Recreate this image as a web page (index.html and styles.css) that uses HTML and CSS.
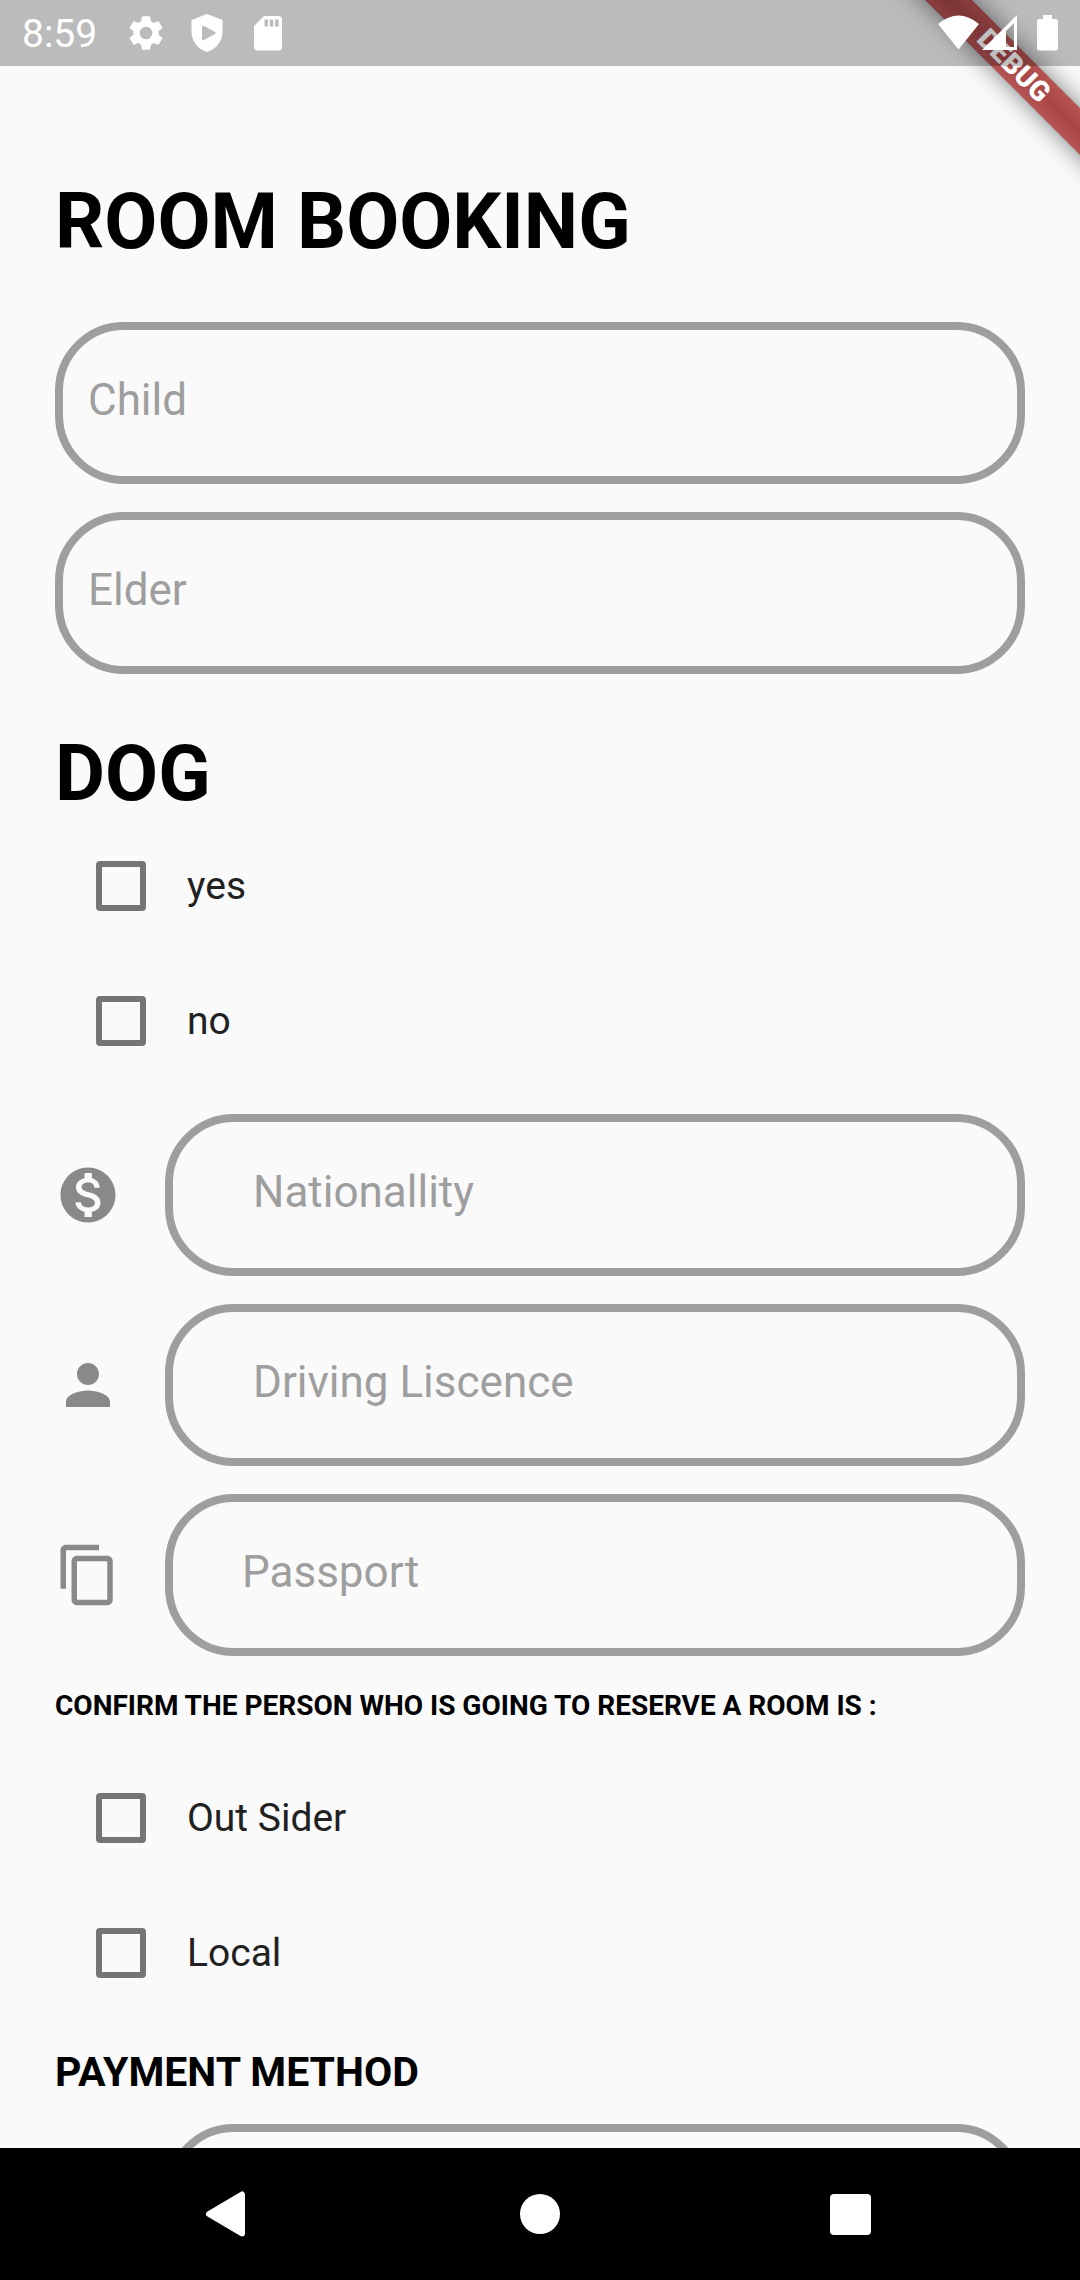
FILE: index.html
```html
<!DOCTYPE html>
<html lang="en">
<head>
<meta charset="utf-8">
<meta name="viewport" content="width=device-width, initial-scale=1">
<title>Room Booking</title>
<link rel="stylesheet" href="styles.css">
</head>
<body>
<div class="screen">
  <header class="status-bar">
    <div class="status-left">
      <span class="clock">8:59</span>
      <svg class="status-icon" viewBox="0 0 24 24" aria-hidden="true"><path fill="#fff" d="M19.14 12.94c.04-.3.06-.61.06-.94 0-.32-.02-.64-.07-.94l2.03-1.58c.18-.14.23-.41.12-.61l-1.92-3.32c-.12-.22-.37-.29-.59-.22l-2.39.96c-.5-.38-1.03-.7-1.62-.94l-.36-2.54c-.04-.24-.24-.41-.48-.41h-3.84c-.24 0-.43.17-.47.41l-.36 2.54c-.59.24-1.13.57-1.62.94l-2.39-.96c-.22-.08-.47 0-.59.22L2.74 8.87c-.12.21-.08.47.12.61l2.03 1.58c-.05.3-.09.63-.09.94s.02.64.07.94l-2.03 1.58c-.18.14-.23.41-.12.61l1.92 3.32c.12.22.37.29.59.22l2.39-.96c.5.38 1.03.7 1.62.94l.36 2.54c.05.24.24.41.48.41h3.84c.24 0 .44-.17.47-.41l.36-2.54c.59-.24 1.13-.56 1.62-.94l2.39.96c.22.08.47 0 .59-.22l1.92-3.32c.12-.22.07-.47-.12-.61l-2.01-1.58zM12 15.6A3.6 3.6 0 1 1 12 8.400a3.600 3.600 0 0 1 0 7.200z"/></svg>
      <svg class="status-icon" viewBox="0 0 42 42" aria-hidden="true"><path fill="#fff" fill-rule="evenodd" d="M21 2L36.500 8V20C36.500 29 30 37.500 21 40C12 37.500 5.500 29 5.500 20V8ZM16 15V27Q16 29 18 28L29 22Q30.500 21 29 20L18 14Q16 13 16 15Z"/></svg>
      <svg class="status-icon" viewBox="0 0 42 42" aria-hidden="true"><path fill="#fff" fill-rule="evenodd" d="M17 4H31.500Q35 4 35 7.500V35Q35 38.500 31.500 38.500H10.500Q7 38.500 7 35V14ZM17.500 7.500V14.500H21V7.500ZM22.800 7.500V14.500H26.300V7.500ZM28.100 7.500V14.500H31.600V7.500Z"/></svg>
    </div>
    <svg class="status-right" viewBox="0 0 124 42" aria-hidden="true">
      <path fill="#fff" d="M2 12Q22.500-5 43 12L22.500 37.500Z"/>
      <path fill="#fff" fill-rule="evenodd" d="M81 3V38H46ZM78 11L70 19V35H78Z"/>
      <path fill="#fff" d="M107 3H116V7H119.500Q122 7 122 9.500V36Q122 38.500 119.500 38.500H103.500Q101 38.500 101 36V9.500Q101 7 103.500 7H107Z"/>
    </svg>
  </header>

  <div class="banner-corner"><div class="banner">DEBUG</div></div>

  <main class="content">
    <h1 class="heading">ROOM BOOKING</h1>
    <form class="form">
      <div class="fields">
        <input class="field" type="text" placeholder="Child" aria-label="Child">
        <input class="field" type="text" placeholder="Elder" aria-label="Elder">
      </div>

      <h2 class="heading">DOG</h2>
      <div class="options">
        <label class="option"><input class="box" type="checkbox">yes</label>
        <label class="option"><input class="box" type="checkbox">no</label>
      </div>

      <div class="fields">
        <div class="field-row">
          <svg class="field-icon" viewBox="0 0 24 24" aria-hidden="true"><path fill="currentColor" d="M12 2C6.480 2 2 6.480 2 12s4.480 10 10 10 10-4.480 10-10S17.520 2 12 2zm1.410 16.090V20h-2.670v-1.930c-1.710-.36-3.160-1.460-3.270-3.400h1.960c.1 1.050.82 1.870 2.650 1.870 1.960 0 2.400-.98 2.400-1.590 0-.83-.44-1.610-2.670-2.140-2.480-.6-4.180-1.620-4.180-3.670 0-1.720 1.390-2.840 3.110-3.210V4h2.670v1.950c1.860.45 2.790 1.860 2.850 3.390H14.300c-.05-1.110-.64-1.870-2.220-1.870-1.500 0-2.400.68-2.400 1.640 0 .84.65 1.390 2.670 1.910s4.180 1.390 4.180 3.910c-.01 1.830-1.380 2.830-3.120 3.160z"/></svg>
          <input class="field inset-wide" type="text" placeholder="Nationallity" aria-label="Nationallity">
        </div>
        <div class="field-row">
          <svg class="field-icon" viewBox="0 0 24 24" aria-hidden="true"><path fill="currentColor" d="M12 12c2.210 0 4-1.790 4-4s-1.790-4-4-4-4 1.790-4 4 1.790 4 4 4zm0 2c-2.670 0-8 1.340-8 4v2h16v-2c0-2.660-5.330-4-8-4z"/></svg>
          <input class="field inset-wide" type="text" placeholder="Driving Liscence" aria-label="Driving Liscence">
        </div>
        <div class="field-row">
          <svg class="field-icon" viewBox="0 0 24 24" aria-hidden="true"><path fill="currentColor" d="M16 1H4c-1.100 0-2 .9-2 2v14h2V3h12V1zm3 4H8c-1.100 0-2 .9-2 2v14c0 1.100.9 2 2 2h11c1.100 0 2-.9 2-2V7c0-1.100-.9-2-2-2zm0 16H8V7h11v14z"/></svg>
          <input class="field inset" type="text" placeholder="Passport" aria-label="Passport">
        </div>
      </div>

      <h3 class="note">CONFIRM THE PERSON WHO IS GOING TO RESERVE A ROOM IS :</h3>
      <div class="options">
        <label class="option"><input class="box" type="checkbox">Out Sider</label>
        <label class="option"><input class="box" type="checkbox">Local</label>
      </div>

      <h3 class="subheading">PAYMENT METHOD</h3>
      <div class="field-row">
        <span class="field-icon"></span>
        <input class="field inset-wide" type="text" aria-label="Payment method">
      </div>
    </form>
  </main>

  <nav class="nav-bar">
    <button class="nav-button" type="button" aria-label="Back"><svg class="nav-icon" viewBox="0 0 48 48" aria-hidden="true"><path fill="#fff" stroke="#fff" stroke-width="6" stroke-linejoin="round" d="M5 24L38 4.500V43.500Z"/></svg></button>
    <button class="nav-button" type="button" aria-label="Home"><svg class="nav-icon" viewBox="0 0 48 48" aria-hidden="true"><circle cx="24" cy="24" r="20" fill="#fff"/></svg></button>
    <button class="nav-button" type="button" aria-label="Recent apps"><svg class="nav-icon" viewBox="0 0 48 48" aria-hidden="true"><rect x="2" y="4" width="41" height="41" rx="4" fill="#fff"/></svg></button>
  </nav>
</div>
</body>
</html>
```
FILE: styles.css
```css
* {
  box-sizing: border-box;
}

body {
  margin: 0;
  background: #fafafa;
  color: #000;
  font-family: Roboto, "Liberation Sans", sans-serif;
}

.screen {
  position: relative;
  display: flex;
  flex-direction: column;
  height: 100vh;
  overflow: hidden;
}

/* Status bar: a translucent layer over the app */
.status-bar {
  position: relative;
  z-index: 2;
  flex: none;
  display: flex;
  align-items: center;
  justify-content: space-between;
  height: 66px;
  padding: 0 20px 0 22px;
  background: rgba(0, 0, 0, 0.25);
}

.status-left {
  display: flex;
  align-items: center;
}

.clock {
  margin-right: 28px;
  padding-top: 2px;
  color: #fff;
  font-size: 39px;
  line-height: 66px;
}

.status-icon {
  width: 42px;
  height: 42px;
  margin-right: 19px;
}

.status-right {
  width: 124px;
  height: 42px;
}

/* Debug ribbon across the top right corner */
.banner-corner {
  position: absolute;
  z-index: 1;
  top: 0;
  right: 0;
  width: 220px;
  height: 220px;
  overflow: hidden;
  pointer-events: none;
}

.banner {
  position: absolute;
  top: 49px;
  right: -134px;
  width: 400px;
  height: 33px;
  background:
    linear-gradient(rgba(183, 28, 28, 0.63), rgba(183, 28, 28, 0.63)),
    linear-gradient(rgba(0, 0, 0, 0.28), rgba(0, 0, 0, 0.42), rgba(0, 0, 0, 0.28));
  box-shadow: 0 0 24px rgba(0, 0, 0, 0.5);
  color: #fff;
  font-size: 28px;
  font-weight: 900;
  line-height: 33px;
  text-align: center;
  transform: rotate(45deg);
}

.content {
  flex: 1;
  min-height: 0;
  padding: 112px 55px 0;
  overflow: hidden;
}

.heading {
  margin: 0 0 56px;
  font-size: 77px;
  font-weight: 700;
  line-height: 88px;
}

.form .heading {
  margin: 56px 0 0;
}

.fields {
  display: flex;
  flex-direction: column;
  gap: 28px;
}

.options + .fields {
  margin-top: 26px;
}

.field-row {
  display: flex;
  align-items: center;
  gap: 44px;
}

.field-icon {
  flex: none;
  width: 66px;
  height: 66px;
  color: #898989;
}

.field {
  flex: 1 0 auto;
  width: 100%;
  min-width: 0;
  height: 162px;
  padding: 0 25px 6px;
  border: 8px solid #9e9e9e;
  border-radius: 69px;
  background: transparent;
  color: #212121;
  font-family: inherit;
  font-size: 44px;
}

.field-row .field {
  flex: 1;
  width: auto;
}

.field.inset {
  padding-left: 69px;
}

.field.inset-wide {
  padding-left: 80px;
}

.field::placeholder {
  color: #9e9e9e;
  opacity: 1;
}

.option {
  display: flex;
  align-items: center;
  gap: 41px;
  height: 135px;
  padding-left: 41px;
  color: #212121;
  font-size: 39px;
}

.box {
  appearance: none;
  width: 50px;
  height: 50px;
  margin: 0;
  border: 6px solid #757575;
  border-radius: 4px;
}

.note {
  margin: 34px 0 28px;
  font-size: 28px;
  font-weight: 700;
  line-height: 32px;
}

.subheading {
  margin: 28px 0;
  font-size: 41px;
  font-weight: 700;
  line-height: 48px;
}

/* System navigation */
.nav-bar {
  flex: none;
  display: flex;
  align-items: center;
  justify-content: center;
  gap: 216px;
  height: 132px;
  background: #000;
}

.nav-button {
  display: flex;
  align-items: center;
  justify-content: center;
  width: 96px;
  height: 96px;
  padding: 0;
  border: 0;
  background: none;
}

.nav-icon {
  width: 48px;
  height: 48px;
}
```
